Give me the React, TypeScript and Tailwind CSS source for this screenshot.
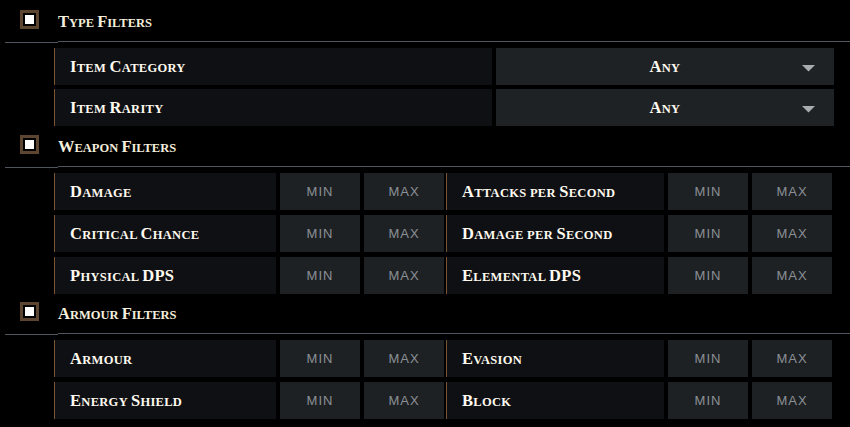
import React from "react";

const serif = "font-['Liberation_Serif',serif] font-bold";

function SC({ text, big, small }: { text: string; big: string; small: string }) {
  const parts = text.split(/([A-Z]+)/).filter((p) => p.length > 0);
  return (
    <span className={`${serif} leading-none whitespace-pre`}>
      {parts.map((p, i) =>
        /[A-Z]/.test(p[0]) ? (
          <span key={i} className={big}>
            {p}
          </span>
        ) : (
          <span key={i} className={small}>
            {p.toUpperCase()}
          </span>
        )
      )}
    </span>
  );
}

function Check() {
  return (
    <div className="w-[19px] h-[19px] border-[3px] border-[#5c4630] bg-black p-[2px] shrink-0">
      <div className="w-full h-full bg-white" />
    </div>
  );
}

function Header({ title, h }: { title: string; h: string }) {
  return (
    <>
      <div className={`flex items-end pb-[8px] ${h}`}>
        <div className="flex items-center">
          <div className="ml-[20px]">
            <Check />
          </div>
          <div className="ml-[19px] mt-[3px] text-[#f4eedc]">
            <SC text={title} big="text-[16.5px]" small="text-[12.5px]" />
          </div>
        </div>
      </div>
      <div className="flex items-start h-[2px]">
        <div className="ml-[5px] w-[53px] h-px mt-px bg-[#4f565f]" />
        <div className="flex-1 h-px bg-[#4f565f]" />
      </div>
    </>
  );
}

function Label({ text, w }: { text: string; w: string }) {
  return (
    <div className={`${w} h-[37px] bg-[#0f1013] border-l border-[#7b5531] pl-[15px] flex items-center`}>
      <span className="text-[#fffaf0] tracking-[0.3px] mb-[1px]">
        <SC text={text} big="text-[16.5px]" small="text-[12.5px]" />
      </span>
    </div>
  );
}

function Box({ text }: { text: string }) {
  return (
    <div className="w-[80px] h-[37px] bg-[#1e2124] flex items-center justify-center">
      <span className="font-['Liberation_Sans',sans-serif] text-[13px] tracking-[1px] text-[#8b9096]">{text}</span>
    </div>
  );
}

function Pair({ a, b }: { a: string; b: string }) {
  return (
    <div className="flex pl-[54px]">
      <div className="flex gap-[4px]">
        <Label text={a} w="w-[222px]" />
        <Box text="MIN" />
        <Box text="MAX" />
      </div>
      <div className="flex gap-[4px] ml-[2px]">
        <Label text={b} w="w-[218px]" />
        <Box text="MIN" />
        <Box text="MAX" />
      </div>
    </div>
  );
}

function SelectRow({ text }: { text: string }) {
  return (
    <div className="flex gap-[4px] pl-[54px]">
      <Label text={text} w="w-[438px]" />
      <div className="w-[338px] h-[37px] bg-[#1f2225] relative flex items-center justify-center">
        <span className="text-[#fffaf0] tracking-[0.3px] mb-[1px]">
          <SC text="Any" big="text-[16.5px]" small="text-[12.5px]" />
        </span>
        <svg className="absolute right-[19px] top-[17px]" width="13" height="7" viewBox="0 0 13 7">
          <polygon points="0,0 13,0 6.5,6.5" fill="#a9acaf" />
        </svg>
      </div>
    </div>
  );
}

export default function App() {
  return (
    <div className="w-[850px] h-[427px] bg-black overflow-hidden">
      <Header title="Type Filters" h="h-[41px]" />
      <div className="mt-[5px] flex flex-col gap-[4px]">
        <SelectRow text="Item Category" />
        <SelectRow text="Item Rarity" />
      </div>
      <Header title="Weapon Filters" h="h-[40px]" />
      <div className="mt-[5px] flex flex-col gap-[5px]">
        <Pair a="Damage" b="Attacks per Second" />
        <Pair a="Critical Chance" b="Damage per Second" />
        <Pair a="Physical DPS" b="Elemental DPS" />
      </div>
      <Header title="Armour Filters" h="h-[39px]" />
      <div className="mt-[5px] flex flex-col gap-[5px]">
        <Pair a="Armour" b="Evasion" />
        <Pair a="Energy Shield" b="Block" />
      </div>
    </div>
  );
}
